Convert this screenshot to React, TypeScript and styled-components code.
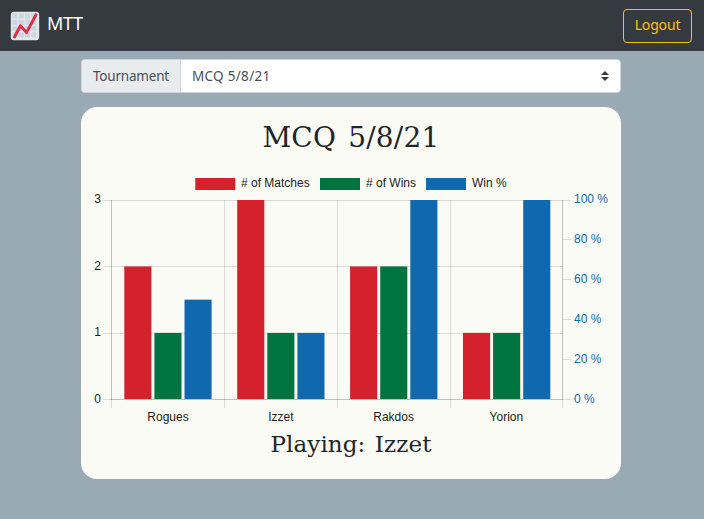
import React from 'react';
import styled, { createGlobalStyle } from 'styled-components';

const GlobalStyle = createGlobalStyle`
  * { box-sizing: border-box; }
  html, body { margin: 0; background: #9aaab4; }
  body { font-family: "Noto Sans", "Open Sans", sans-serif; color: #212529; overflow: hidden; }
`;

const Page = styled.div`
  min-height: 519px;
  background: #9aaab4;
`;

const Navbar = styled.header`
  height: 51px;
  padding: 0 12px 0 10px;
  display: flex;
  align-items: center;
  justify-content: space-between;
  background: #343a40;
`;

const Brand = styled.div`
  display: flex;
  align-items: center;
  gap: 7px;
  height: 51px;
  color: #fff;
`;

const BrandName = styled.span`
  font-size: 18px;
  line-height: 27px;
  letter-spacing: -0.35px;
  margin-top: -4px;
`;

const LogoutButton = styled.button`
  width: 69px;
  height: 34px;
  padding: 0 0 2px;
  border: 1px solid #ffc107;
  border-radius: 4px;
  background: transparent;
  color: #ffc107;
  font: 14px "Noto Sans", sans-serif;
  letter-spacing: -0.15px;
`;

const Content = styled.main`
  width: 540px;
  margin-left: 81px;
  padding-top: 8px;
`;

const InputGroup = styled.div`
  display: flex;
  height: 34px;
  border: 1px solid #ced4da;
  border-radius: 4px;
  overflow: hidden;
  background: #fff;
  color: #495057;
  font-size: 13.5px;
  line-height: 33px;
`;

const GroupLabel = styled.label`
  width: 99px;
  padding-left: 11px;
  background: #e9ecef;
  border-right: 1px solid #ced4da;
  letter-spacing: -0.2px;
`;

const Selected = styled.div`
  flex: 1;
  display: flex;
  align-items: center;
  justify-content: space-between;
  padding: 0 11px;
  letter-spacing: 0.3px;
`;

const Card = styled.section`
  height: 372px;
  margin-top: 14px;
  border-radius: 16px;
  background: #fafbf5;
  display: flex;
  flex-direction: column;
`;

const Heading = styled.h2<{ $size: number; $height: number; $spacing: number; $gap: number }>`
  margin: 0;
  height: ${p => p.$height}px;
  line-height: ${p => p.$height}px;
  font-family: "DejaVu Serif", serif;
  font-weight: 400;
  font-size: ${p => p.$size}px;
  letter-spacing: ${p => p.$spacing}px;
  word-spacing: ${p => p.$gap}px;
  text-align: center;
  white-space: nowrap;
`;

const ChartCanvas = styled.svg`
  display: block;
  width: 540px;
  height: 260px;
  font-family: "Liberation Sans", Arial, sans-serif;
  font-size: 12px;
`;

const series = [
  { label: '# of Matches', color: '#d4212b', x: 195.3, textX: 241 },
  { label: '# of Wins', color: '#00743f', x: 320, textX: 366 },
  { label: 'Win %', color: '#1068af', x: 426, textX: 472 },
];

const decks = [
  { name: 'Rogues', values: [2, 1, 1.5] },
  { name: 'Izzet', values: [3, 1, 1] },
  { name: 'Rakdos', values: [2, 2, 3] },
  { name: 'Yorion', values: [1, 1, 3] },
];

const top = 200;
const bottom = 399.3;
const unit = (bottom - top) / 3;

function Chart() {
  return (
    <ChartCanvas viewBox="81 168 540 260">
      {series.map(s => (
        <g key={s.label}>
          <rect x={s.x} y="178" width="40" height="12" fill={s.color} />
          <text x={s.textX} y="187" fill="#231c18">{s.label}</text>
        </g>
      ))}
      <g fill="none" stroke="#000" strokeOpacity="0.12">
        {[200.5, 266.5, 333.5, 399.5].map(y => <path key={y} d={`M103 ${y}H563`} />)}
        {[111.5, 224.5, 337.5, 450.5, 562.5].map(x => <path key={x} d={`M${x} 200V408`} />)}
        {[200.5, 239.5, 279.5, 319.5, 359.5, 399.5].map(y => <path key={y} d={`M563 ${y}H571`} />)}
        <path d="M111.5 200V400M562.5 200V400M111 399.5H563" />
      </g>
      {decks.map((d, i) => (
        <g key={d.name}>
          {d.values.map((v, j) => (
            <rect
              key={series[j].label}
              x={124.3 + i * 112.9 + j * 30.1}
              y={bottom - v * unit}
              width="27.1"
              height={399 - bottom + v * unit}
              fill={series[j].color}
            />
          ))}
          <text x={168 + i * 112.8} y="421" textAnchor="middle" fill="#231c18">{d.name}</text>
        </g>
      ))}
      {[3, 2, 1, 0].map((n, i) => (
        <text key={n} x="101" y={[203, 270, 336, 403][i]} textAnchor="end" fill="#231c18">{n}</text>
      ))}
      {[100, 80, 60, 40, 20, 0].map((n, i) => (
        <text key={n} x="574" y={[203, 243, 283, 323, 363, 403][i]} fill="#1068af">{n} %</text>
      ))}
    </ChartCanvas>
  );
}

function Logo() {
  return (
    <svg width="30" height="30" viewBox="0 0 30 30">
      <rect x="0.8" y="0.8" width="28.4" height="28.4" rx="3" fill="#e1e8ed" />
      {[2.5, 8.8, 15.1, 21.4].map(y =>
        [2.5, 8.8, 15.1, 21.4].map(x => (
          <rect key={`${x}-${y}`} x={x} y={y} width="5" height="5" fill="#ccd6dd" />
        )),
      )}
      <path d="M4.5 26L10.4 14.8L16.6 21.4L26 3.8" fill="none" stroke="#dd2e44" strokeWidth="2.9" strokeLinecap="round" strokeLinejoin="round" />
    </svg>
  );
}

export default function App() {
  return (
    <Page>
      <GlobalStyle />
      <Navbar>
        <Brand>
          <Logo />
          <BrandName>MTT</BrandName>
        </Brand>
        <LogoutButton>Logout</LogoutButton>
      </Navbar>
      <Content>
        <InputGroup>
          <GroupLabel>Tournament</GroupLabel>
          <Selected>
            <span>MCQ 5/8/21</span>
            <svg width="8" height="10" viewBox="0 0 4 5" fill="#343a40">
              <path d="M2 0L0 2h4zm0 5L0 3h4z" />
            </svg>
          </Selected>
        </InputGroup>
        <Card>
          <Heading $size={28} $height={61} $spacing={0.2} $gap={3}>MCQ 5/8/21</Heading>
          <Chart />
          <Heading $size={23} $height={32} $spacing={0.1} $gap={2}>Playing: Izzet</Heading>
        </Card>
      </Content>
    </Page>
  );
}
